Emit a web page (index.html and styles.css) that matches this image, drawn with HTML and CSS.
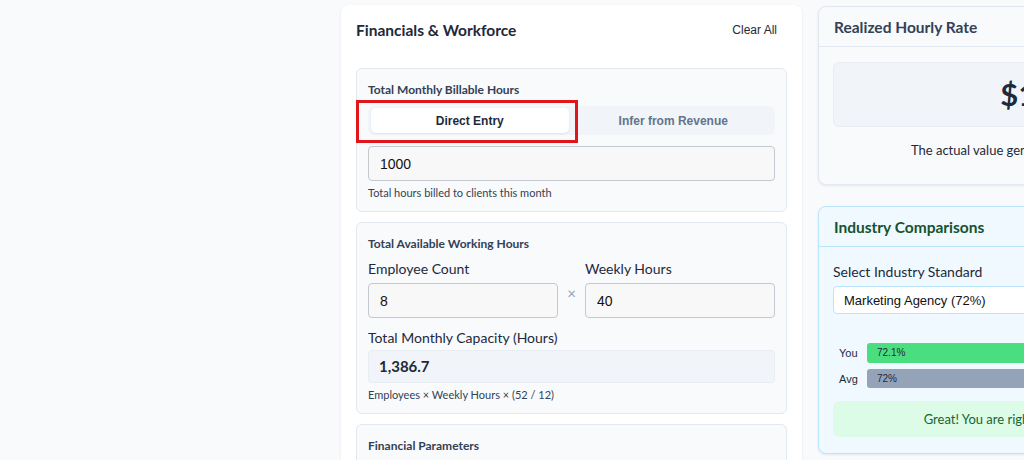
FILE: index.html
```html
<!DOCTYPE html>
<html>
<head>
  <meta charset="UTF-8">
  <title>Utilization Calculator</title>
  <link rel="stylesheet" href="styles.css">
</head>
<body>
  <div class="layout">
    <aside class="left-col"></aside>

    <main class="card inputs-card">
      <div class="card-head">
        <h2>Financials &amp; Workforce</h2>
        <button class="clear-btn">Clear All</button>
      </div>

      <section class="group">
        <h3>Total Monthly Billable Hours</h3>
        <div class="mode-toggle">
          <button class="mode-btn active">Direct Entry</button>
          <button class="mode-btn">Infer from Revenue</button>
          <span class="highlight"></span>
        </div>
        <input class="field" type="text" value="1000">
        <p class="hint">Total hours billed to clients this month</p>
      </section>

      <section class="group">
        <h3>Total Available Working Hours</h3>
        <div class="pair-row">
          <label class="field-label">Employee Count</label>
          <span></span>
          <label class="field-label">Weekly Hours</label>
          <input class="field" type="text" value="8">
          <span class="times">&times;</span>
          <input class="field" type="text" value="40">
        </div>
        <label class="field-label cap-label">Total Monthly Capacity (Hours)</label>
        <div class="readonly">1,386.7</div>
        <p class="hint">Employees &times; Weekly Hours &times; (52 / 12)</p>
      </section>

      <section class="group">
        <h3>Financial Parameters</h3>
      </section>
    </main>

    <div class="right-col">
      <div class="card rate-card">
        <div class="side-head">
          <h2>Realized Hourly Rate</h2>
        </div>
        <div class="side-body">
          <div class="rate-box">$14.42</div>
          <p class="rate-note">The actual value generated for each billable hour</p>
        </div>
      </div>

      <div class="card industry-card">
        <div class="side-head">
          <h2>Industry Comparisons</h2>
        </div>
        <div class="side-body">
          <label class="field-label">Select Industry Standard</label>
          <select class="industry-select">
            <option>Marketing Agency (72%)</option>
          </select>
          <div class="bars">
            <div class="bar-row">
              <span class="bar-name">You</span>
              <div class="bar-track"><div class="bar you" style="width: 72.1%">72.1%</div></div>
            </div>
            <div class="bar-row">
              <span class="bar-name">Avg</span>
              <div class="bar-track"><div class="bar avg" style="width: 72%">72%</div></div>
            </div>
          </div>
          <div class="verdict">Great! You are right on the industry average.</div>
        </div>
      </div>
    </div>
  </div>
</body>
</html>
```

FILE: styles.css
```css
body {
  margin: 0;
  background-color: #f8fafc;
  font-family: Lato, "Noto Sans", sans-serif;
  color: #1e293b;
  overflow: hidden;
}

.layout {
  display: grid;
  grid-template-columns: 325px 461px 462px;
  column-gap: 16px;
  padding-top: 5px;
}

.card {
  background-color: #fff;
  border-radius: 8px;
  box-shadow: 0 1px 3px rgba(15, 23, 42, 0.08);
}

/* middle column */
.inputs-card {
  padding: 14px 15px 0;
  height: 470px;
}

.card-head {
  display: flex;
  justify-content: space-between;
  align-items: center;
  margin-bottom: 27px;
}

.card-head h2 {
  margin: 0;
  font-size: 15.5px;
  font-weight: 700;
  line-height: 22px;
  color: #1e293b;
}

.clear-btn {
  background: none;
  border: none;
  padding: 0 10px 0 0;
  font-family: "Liberation Sans", Arial, sans-serif;
  font-size: 12px;
  color: #1e293b;
  cursor: pointer;
}

.group {
  background-color: #f8fafc;
  border: 1px solid #e2e8f0;
  border-radius: 6px;
  padding: 12px 11px 11px;
  margin-bottom: 10px;
}

.group h3 {
  margin: 0 0 8px;
  font-size: 12px;
  font-weight: 700;
  line-height: 17px;
  color: #334155;
}

.mode-toggle {
  position: relative;
  display: grid;
  grid-template-columns: 1fr 1fr;
  gap: 6px;
  padding: 2px 3px;
  background-color: #f1f5f9;
  border-radius: 6px;
  margin-bottom: 11px;
}

.mode-btn {
  height: 25px;
  border: none;
  border-radius: 5px;
  background: none;
  font-family: "Liberation Sans", Arial, sans-serif;
  font-size: 12px;
  font-weight: 700;
  color: #64748b;
  cursor: pointer;
}

.mode-btn.active {
  background-color: #fff;
  color: #1e293b;
  box-shadow: 0 1px 2px rgba(15, 23, 42, 0.08);
}

/* red annotation frame */
.highlight {
  position: absolute;
  left: -12px;
  top: -6px;
  width: 216px;
  height: 37px;
  border: 3px solid #e0161b;
  pointer-events: none;
}

.field {
  box-sizing: border-box;
  width: 100%;
  height: 35px;
  padding: 0 11px;
  border: 1px solid #c4c9cf;
  border-radius: 4px;
  background-color: #f8f8f8;
  font-family: "Liberation Sans", Arial, sans-serif;
  font-size: 14px;
  color: #111;
}

.hint {
  margin: 5px 0 0;
  font-size: 11px;
  line-height: 14px;
  color: #334155;
}

.field-label {
  display: block;
  font-size: 14px;
  line-height: 18px;
  color: #1e293b;
}

.pair-row {
  display: grid;
  grid-template-columns: 1fr 27px 1fr;
  row-gap: 5px;
}

.times {
  text-align: center;
  font-size: 15px;
  line-height: 20px;
  color: #94a3b8;
}

.cap-label {
  margin-top: 11px;
  margin-bottom: 3px;
}

.readonly {
  height: 33px;
  box-sizing: border-box;
  padding: 0 10px;
  border: 1px solid #e8edf3;
  border-radius: 4px;
  background-color: #f1f5f9;
  font-size: 15px;
  font-weight: 700;
  line-height: 31px;
  color: #1e293b;
}

/* right column */
.right-col {
  display: flex;
  flex-direction: column;
  gap: 21px;
  padding-top: 1px;
}

.rate-card,
.industry-card {
  background-color: #f8fafc;
  border: 1px solid #e2e8f0;
}

.industry-card {
  background-color: #f0f9ff;
  border-color: #bae6fd;
}

.side-head {
  padding: 10px 15px 9px;
  border-bottom: 1px solid #e2e8f0;
}

.industry-card .side-head {
  border-bottom-color: #bae6fd;
}

.side-head h2 {
  margin: 0;
  font-size: 15.5px;
  font-weight: 700;
  line-height: 20px;
  color: #334155;
}

.industry-card .side-head h2 {
  color: #14532d;
}

.side-body {
  padding: 15px 14px 16px;
}

.rate-box {
  height: 65px;
  box-sizing: border-box;
  border: 1px solid #e8edf3;
  border-radius: 6px;
  background-color: #f1f5f9;
  text-align: center;
  font-size: 31px;
  font-weight: 700;
  line-height: 63px;
  color: #1e293b;
}

.rate-note {
  margin: 14px 0 9px;
  text-align: center;
  font-size: 13px;
  line-height: 18px;
  color: #1e293b;
}

.industry-card .side-body {
  padding-top: 16px;
}

.industry-card .field-label {
  margin-bottom: 5px;
}

.industry-select {
  width: 100%;
  height: 28px;
  padding: 0 6px;
  border: 1px solid #bae6fd;
  border-radius: 4px;
  background-color: #fff;
  font-family: "Liberation Sans", Arial, sans-serif;
  font-size: 13px;
  color: #111;
}

.bars {
  margin-top: 29px;
  display: flex;
  flex-direction: column;
  gap: 6px;
}

.bar-row {
  display: flex;
  align-items: center;
}

.bar-name {
  width: 34px;
  padding-left: 6px;
  box-sizing: border-box;
  font-family: "Liberation Sans", Arial, sans-serif;
  font-size: 11px;
  color: #1e293b;
}

.bar-track {
  flex: 1;
}

.bar {
  height: 20px;
  box-sizing: border-box;
  padding-left: 10px;
  border-radius: 3px;
  font-family: "Liberation Sans", Arial, sans-serif;
  font-size: 10px;
  line-height: 20px;
  color: #1e293b;
}

.bar.you {
  background-color: #4ade80;
}

.bar.avg {
  height: 19px;
  line-height: 19px;
  background-color: #94a3b8;
}

.verdict {
  margin-top: 13px;
  height: 36px;
  border-radius: 6px;
  background-color: #dcfce7;
  text-align: center;
  font-size: 13px;
  line-height: 36px;
  color: #166534;
}
```
